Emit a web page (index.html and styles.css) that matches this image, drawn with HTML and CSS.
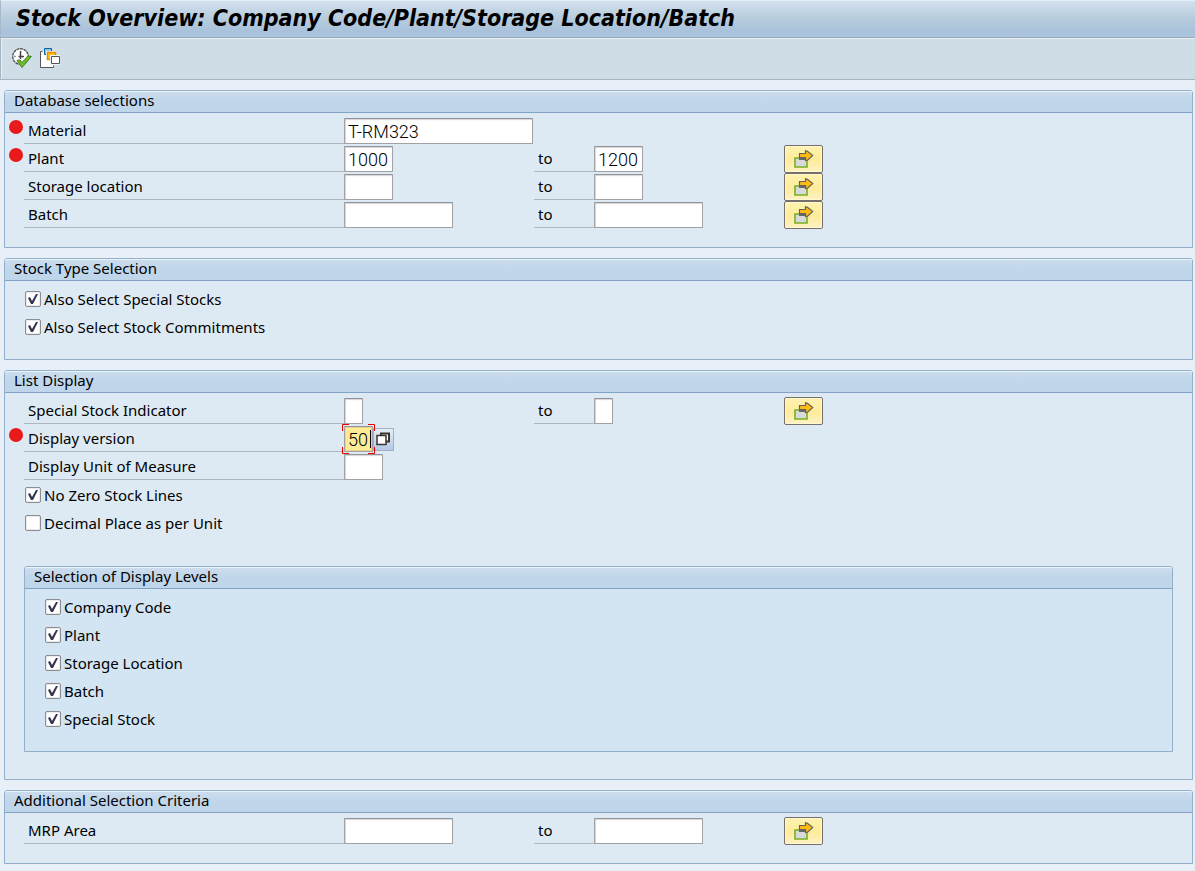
FILE: index.html
```html
<!DOCTYPE html>
<html lang="en">
<head>
<meta charset="utf-8">
<title>Stock Overview</title>
<link rel="stylesheet" href="styles.css">
</head>
<body>
<svg class="defs" aria-hidden="true">
  <symbol id="multi" viewBox="0 0 20 18">
    <path d="M1 8h12v9H1z" fill="#d9d9dc" stroke="#76b022" stroke-width="1.6"/>
    <path d="M5 7h8v3H5z" fill="#666"/>
    <path d="M5.5 3.5h6V.8l2 .5 5.2 4.2-5.2 4.6-2 .4V7.5h-6z" fill="#fdbb12" stroke="#63635c" stroke-width="1.2"/>
  </symbol>
</svg>
<header class="titlebar"><h1>Stock Overview: Company Code/Plant/Storage Location/Batch</h1></header>
<nav class="toolbar" aria-label="Application toolbar">
  <button type="button" class="tool" aria-label="Execute">
    <svg viewBox="0 0 20 20" width="20" height="20">
      <circle cx="8.5" cy="8.5" r="7.8" fill="#fff" stroke="#555" stroke-width="1.4" stroke-dasharray="3 .6"/>
      <path d="M8.5 3v8M6.5 8.5H12M2.5 8.5h1" stroke="#444" stroke-width="1.5" fill="none"/>
      <path d="M5 12.5l3-.6 2 2.6 6-6.5 3.4.4L10 19.6z" fill="#6cbf2c" stroke="#43821b" stroke-width="1"/>
    </svg>
  </button>
  <button type="button" class="tool" aria-label="Get variant">
    <svg viewBox="0 0 20 20" width="20" height="20">
      <path d="M1 3v16h13v-5h5V8H9V3z" fill="#fff"/>
      <path d="M2.5 3.5h-2v16h13v-2" stroke="#555" fill="none"/>
      <path d="M4.5 .5h7v6h-7z" fill="#9cc3de" stroke="#00679e"/>
      <path d="M6 3h10v9H6z" fill="#e8f1fa"/>
      <path d="M7.5 4.5h8v7h-8z" fill="#fdc513" stroke="#f08a00" stroke-width="1.4"/>
      <path d="M10 7h10v10H10z" fill="#e8f1fa"/>
      <path d="M11.500 8.500h8v7h-8z" fill="#fff" stroke="#555"/>
    </svg>
  </button>
</nav>
<main class="page">
  <section class="group">
    <h2>Database selections</h2>
    <div class="content">
      <div class="row"><label class="required" for="mat">Material</label><input id="mat" class="w18" value="T-RM323"></div>
      <div class="row"><label class="required" for="pl">Plant</label><input id="pl" class="w4" value="1000"><label for="pl2">to</label><input id="pl2" class="w4" value="1200"><button type="button" class="multi" aria-label="Multiple selection"><svg><use href="#multi"/></svg></button></div>
      <div class="row"><label for="sl">Storage location</label><input id="sl" class="w4"><label for="sl2">to</label><input id="sl2" class="w4"><button type="button" class="multi" aria-label="Multiple selection"><svg><use href="#multi"/></svg></button></div>
      <div class="row"><label for="ba">Batch</label><input id="ba" class="w10"><label for="ba2">to</label><input id="ba2" class="w10"><button type="button" class="multi" aria-label="Multiple selection"><svg><use href="#multi"/></svg></button></div>
    </div>
  </section>
  <section class="group">
    <h2>Stock Type Selection</h2>
    <div class="content">
      <label class="check"><input type="checkbox" checked>Also Select Special Stocks</label>
      <label class="check"><input type="checkbox" checked>Also Select Stock Commitments</label>
    </div>
  </section>
  <section class="group">
    <h2>List Display</h2>
    <div class="content tall">
      <div class="row"><label for="ss">Special Stock Indicator</label><input id="ss" class="w1"><label for="ss2">to</label><input id="ss2" class="w1"><button type="button" class="multi" aria-label="Multiple selection"><svg><use href="#multi"/></svg></button></div>
      <div class="row"><label class="required" for="dv">Display version</label>
        <div class="active"><span class="focus"><input id="dv" class="w2" value="50"><i class="caret"></i><svg class="corners" viewBox="0 0 33 30"><path d="M.5 7V.5H7M26 .5h6.5V7M32.5 23v6.5H26M7 29.5H.5V23" fill="none" stroke="#e60000"/></svg></span><button type="button" class="match" aria-label="Possible entries"><svg viewBox="0 0 16 16" width="16" height="16"><path d="M5 2.5h8v8H5z" fill="#fff" stroke="#3c342e" stroke-width="2"/><path d="M1 4.5h9v9H1z" fill="#fff" stroke="#3c342e" stroke-width="1.5"/></svg></button></div>
      </div>
      <div class="row"><label for="um">Display Unit of Measure</label><input id="um" class="w3"></div>
      <label class="check"><input type="checkbox" checked>No Zero Stock Lines</label>
      <label class="check"><input type="checkbox">Decimal Place as per Unit</label>
      <section class="group nested">
        <h2>Selection of Display Levels</h2>
        <div class="content">
          <label class="check"><input type="checkbox" checked>Company Code</label>
          <label class="check"><input type="checkbox" checked>Plant</label>
          <label class="check"><input type="checkbox" checked>Storage Location</label>
          <label class="check"><input type="checkbox" checked>Batch</label>
          <label class="check"><input type="checkbox" checked>Special Stock</label>
        </div>
      </section>
    </div>
  </section>
  <section class="group">
    <h2>Additional Selection Criteria</h2>
    <div class="content">
      <div class="row"><label for="mrp">MRP Area</label><input id="mrp" class="w10"><label for="mrp2">to</label><input id="mrp2" class="w10"><button type="button" class="multi" aria-label="Multiple selection"><svg><use href="#multi"/></svg></button></div>
    </div>
  </section>
</main>
</body>
</html>
```
FILE: styles.css
```css
* { box-sizing: border-box; }
body {
  margin: 0;
  background: #e8eff7;
  color: #000;
  font: 15px/20px "Noto Sans", "Open Sans", sans-serif;
}
.defs { display: none; }
h1, h2 { margin: 0; }
.titlebar {
  height: 38px;
  padding-left: 15px;
  border-top: 1px solid #e4eef7;
  border-left: 1px solid #a9b8c6;
  border-bottom: 1px solid #98a9b8;
  background: linear-gradient(#d3e1ee, #b6cbdc 50%, #a9c2dc 85%, #adc5de);
}
h1 {
  font: italic bold 23px/35px "DejaVu Sans Condensed", "DejaVu Sans", sans-serif;
  white-space: nowrap;
}
.toolbar {
  display: flex;
  align-items: center;
  gap: 8px;
  height: 42px;
  padding: 0 11px 2px;
  border: solid #a4b5c4;
  border-width: 0 0 1px 1px;
  background: #cfdde6;
  box-shadow: inset 1px 1px #e8f0f6;
}
.tool {
  width: 20px;
  height: 20px;
  padding: 0;
  border: 0;
  background: none;
}
.tool svg { display: block; }
.page {
  display: grid;
  gap: 10px;
  padding: 10px 2px 7px 4px;
}
.group {
  border: 1px solid #92afcc;
  border-radius: 3px 3px 0 0;
  background: #deeaf3;
}
h2 {
  height: 22px;
  padding-left: 9px;
  border-bottom: 1px solid #82a2c6;
  border-radius: 2px 2px 0 0;
  background: linear-gradient(#cddded, #c0d6eb 50%, #bfd5ea);
  box-shadow: inset 0 1px #e9f3fb;
  font-weight: 400;
  font-size: 15px;
  line-height: 19px;
}
.content { padding: 4px 19px 18px; }
.tall { padding-bottom: 27px; }
.nested { margin-top: 29px; background: #d3e4f2; }
.row {
  display: grid;
  grid-template-columns: 320px 190px 60px 190px 39px;
  align-items: center;
  height: 28px;
}
.row label {
  position: relative;
  height: 26px;
  padding-left: 4px;
  border-bottom: 1px solid #b0b4be;
  line-height: 25px;
}
.required::before {
  content: "";
  position: absolute;
  top: 2px;
  left: -15px;
  width: 14px;
  height: 14px;
  border-radius: 50%;
  background: #e81a1c;
}
.row input {
  height: 26px;
  padding: 0 3px;
  border: 1px solid #a2a2a6;
  border-top-color: #929297;
  border-radius: 1px;
  outline: 0;
  background: #fff;
  box-shadow: inset 1px 1px 1px #d6d6da;
  color: #000;
  font: 300 18px/24px Roboto, "Liberation Sans", sans-serif;
}
.w1 { width: 19px; }
.w2 { width: 29px; }
.w3 { width: 39px; }
.w4 { width: 49px; }
.w10 { width: 109px; }
.w18 { width: 189px; }
.multi {
  display: grid;
  place-items: center;
  height: 28px;
  padding: 0;
  border: 1px solid #77706a;
  border-radius: 2px;
  background: linear-gradient(#fff3b0, #feeb9b 55%, #fdf3c2);
  box-shadow: inset 0 0 0 1px #fff8d0;
}
.multi svg { width: 20px; height: 18px; }
.active { display: flex; align-items: center; }
.focus { position: relative; display: flex; }
.row .focus input { background: #ffeb95; box-shadow: inset 0 0 0 1px #e4d48c; }
.caret {
  position: absolute;
  top: 4px;
  right: 2px;
  width: 1px;
  height: 18px;
  background: #000;
}
.corners {
  position: absolute;
  top: -2px;
  left: -2px;
  width: 33px;
  height: 30px;
}
.match {
  display: grid;
  place-items: center;
  width: 21px;
  height: 23px;
  padding: 0;
  border: 1px solid #a3b0c2;
  background: linear-gradient(#e6edf7, #b3c8e6);
}
.check {
  display: flex;
  align-items: center;
  gap: 3px;
  height: 28px;
  padding-left: 1px;
  line-height: 28px;
}
.check input {
  appearance: none;
  width: 16px;
  height: 16px;
  margin: 0;
  border: 1px solid #8b8b90;
  border-radius: 2px;
  background: #fff;
  box-shadow: inset 0 0 0 1px #ececf0;
}
.check input:checked::before {
  content: "";
  display: block;
  width: 14px;
  height: 14px;
  background: #33344e;
  clip-path: polygon(2px 6px, 4px 5px, 6px 9px, 10px 2px, 12px 2px, 7px 12px, 5px 12px);
}
```
